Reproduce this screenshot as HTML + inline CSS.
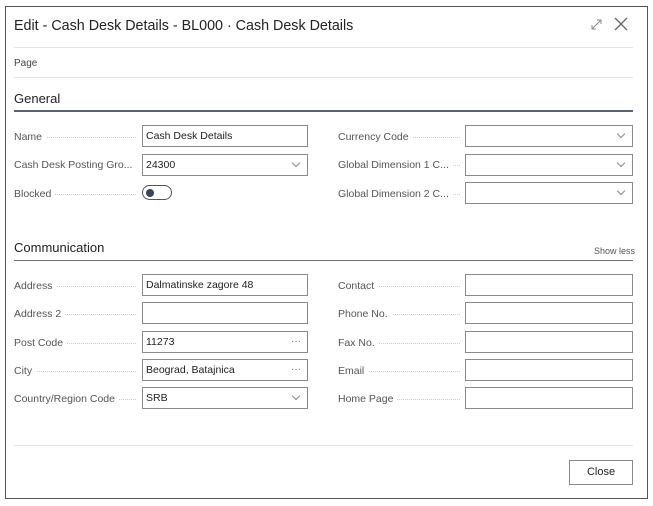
<!DOCTYPE html><html><head><style>
*{margin:0;padding:0;box-sizing:border-box}
body{width:653px;height:506px;background:#fff;font-family:"Liberation Sans",sans-serif;position:relative;overflow:hidden;color:#212121}
.a{position:absolute}
.frame{left:5px;top:6px;width:643px;height:493px;border:1.5px solid #555}
.lbl{position:absolute;font-size:10.5px;color:#555;white-space:nowrap;overflow:hidden}
.lbl span{position:absolute;left:0;right:0;top:6px;border-bottom:1px dotted #ccc;z-index:0}
.lbl b{font-weight:normal;background:#fff;position:relative;z-index:1;padding-right:4px}
.in{position:absolute;border:1px solid #8a8a8a;height:22px;font-size:10.5px;line-height:21px;padding-left:3px;background:#fff;color:#212121}
.chev{position:absolute;right:8px;top:5px;width:6px;height:6px;border-right:1px solid #888;border-bottom:1px solid #888;transform:rotate(45deg)}
.dots{position:absolute;right:6px;top:1px;font-size:10px;color:#666;line-height:18px}
.hr{position:absolute;left:14px;width:619px;height:1px;background:#e4e4e4}
</style></head><body>
<div class="a frame"></div>
<div class="a" style="left:14px;top:18px;font-size:14.3px;color:#222">Edit - Cash Desk Details - BL000 · Cash Desk Details</div>
<svg class="a" style="left:589px;top:16px" width="45" height="16"><path d="M3 13 L12 4 M8 4 H12 V8 M3 9 V13 H7" stroke="#888" fill="none" stroke-width="1"/><path d="M26 2 L38 14 M38 2 L26 14" stroke="#666" stroke-width="1.3"/></svg>
<div class="hr" style="top:47px"></div>
<div class="a" style="left:14px;top:58px;font-size:10px;color:#444">Page</div>
<div class="hr" style="top:77px"></div>
<div class="a" style="left:14px;top:91px;font-size:13px;color:#222">General</div>
<div class="a" style="left:14px;top:110px;width:619px;height:1.5px;background:#5a6470"></div>

<div class="lbl" style="left:14px;top:131px;width:122px"><span></span><b>Name</b></div>
<div class="in" style="left:142px;top:125px;width:166px">Cash Desk Details</div>
<div class="lbl" style="left:14px;top:159px;width:122px"><span></span><b>Cash Desk Posting Gro...</b></div>
<div class="in" style="left:142px;top:154px;width:166px">24300<i class="chev"></i></div>
<div class="lbl" style="left:14px;top:188px;width:122px"><span></span><b>Blocked</b></div>
<div class="a" style="left:142px;top:185px;width:30px;height:15px;border:1px solid #555;border-radius:8px"><div class="a" style="left:3px;top:2.5px;width:8px;height:8px;border-radius:50%;background:#3a4654"></div></div>

<div class="lbl" style="left:338px;top:131px;width:122px"><span></span><b>Currency Code</b></div>
<div class="in" style="left:465px;top:125px;width:168px"><i class="chev"></i></div>
<div class="lbl" style="left:338px;top:159px;width:122px"><span></span><b>Global Dimension 1 C...</b></div>
<div class="in" style="left:465px;top:154px;width:168px"><i class="chev"></i></div>
<div class="lbl" style="left:338px;top:188px;width:122px"><span></span><b>Global Dimension 2 C...</b></div>
<div class="in" style="left:465px;top:182px;width:168px"><i class="chev"></i></div>

<div class="a" style="left:14px;top:240px;font-size:13px;color:#222">Communication</div>
<div class="a" style="left:594px;top:246px;font-size:9px;color:#555">Show less</div>
<div class="a" style="left:14px;top:260px;width:619px;height:1px;background:#6a7480"></div>

<div class="lbl" style="left:14px;top:280px;width:122px"><span></span><b>Address</b></div>
<div class="in" style="left:142px;top:274px;width:166px">Dalmatinske zagore 48</div>
<div class="lbl" style="left:14px;top:308px;width:122px"><span></span><b>Address 2</b></div>
<div class="in" style="left:142px;top:302px;width:166px"></div>
<div class="lbl" style="left:14px;top:337px;width:122px"><span></span><b>Post Code</b></div>
<div class="in" style="left:142px;top:331px;width:166px">11273<i class="dots">···</i></div>
<div class="lbl" style="left:14px;top:365px;width:122px"><span></span><b>City</b></div>
<div class="in" style="left:142px;top:359px;width:166px">Beograd, Batajnica<i class="dots">···</i></div>
<div class="lbl" style="left:14px;top:393px;width:122px"><span></span><b>Country/Region Code</b></div>
<div class="in" style="left:142px;top:387px;width:166px">SRB<i class="chev"></i></div>

<div class="lbl" style="left:338px;top:280px;width:122px"><span></span><b>Contact</b></div>
<div class="in" style="left:465px;top:274px;width:168px"></div>
<div class="lbl" style="left:338px;top:308px;width:122px"><span></span><b>Phone No.</b></div>
<div class="in" style="left:465px;top:302px;width:168px"></div>
<div class="lbl" style="left:338px;top:337px;width:122px"><span></span><b>Fax No.</b></div>
<div class="in" style="left:465px;top:331px;width:168px"></div>
<div class="lbl" style="left:338px;top:365px;width:122px"><span></span><b>Email</b></div>
<div class="in" style="left:465px;top:359px;width:168px"></div>
<div class="lbl" style="left:338px;top:393px;width:122px"><span></span><b>Home Page</b></div>
<div class="in" style="left:465px;top:387px;width:168px"></div>

<div class="hr" style="top:445px"></div>
<div class="a" style="left:569px;top:460px;width:64px;height:25px;border:1px solid #8a8a8a;font-size:11px;text-align:center;line-height:23px;color:#222">Close</div>
</body></html>
